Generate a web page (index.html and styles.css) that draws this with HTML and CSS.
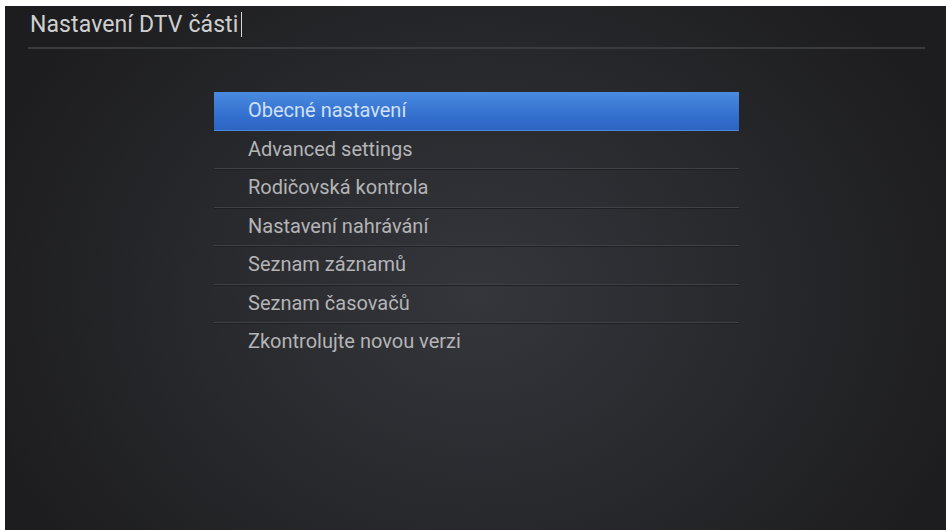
FILE: index.html
```html
<!DOCTYPE html>
<html lang="cs">
<head>
    <meta charset="UTF-8">
    <meta name="viewport" content="width=device-width, initial-scale=1.0">
    <title>Nastavení DTV části</title>
    <link rel="stylesheet" href="styles.css">
</head>
<body>
    <div class="screen">
        <header class="header">
            <h1 class="title">Nastavení DTV části<span class="caret"></span></h1>
        </header>
        <ul class="menu">
            <li class="item active">Obecné nastavení</li>
            <li class="item">Advanced settings</li>
            <li class="item">Rodičovská kontrola</li>
            <li class="item">Nastavení nahrávání</li>
            <li class="item">Seznam záznamů</li>
            <li class="item">Seznam časovačů</li>
            <li class="item last">Zkontrolujte novou verzi</li>
        </ul>
    </div>
</body>
</html>
```
FILE: styles.css
```css
html, body {
    margin: 0;
    padding: 0;
    background: #ffffff;
    height: 100%;
}

body {
    font-family: Roboto, "Noto Sans", sans-serif;
}

.screen {
    box-sizing: border-box;
    margin: 6px 2px 0 5px;
    height: 524px;
    background:
        radial-gradient(ellipse 55% 80% at 50% 55%, #35363b 0%, #2a2b2f 45%, #1d1d1f 100%);
    overflow: hidden;
}

.header {
    padding: 6px 21px 0 23px;
}

.title {
    margin: 0;
    padding: 0 0 9px 2px;
    font-size: 23px;
    font-weight: 400;
    line-height: 26px;
    letter-spacing: 0.1px;
    color: #cfcfcf;
    border-bottom: 2px solid #3a3b3e;
}

.caret {
    display: inline-block;
    width: 1px;
    height: 25px;
    margin-left: 3px;
    vertical-align: -5px;
    background: #d8d8d8;
}

.menu {
    list-style: none;
    margin: 43px 0 0 209px;
    padding: 0;
    width: 525px;
}

.item {
    height: 37.5px;
    line-height: 37.5px;
    padding-left: 34px;
    font-size: 20px;
    color: #b4b4b6;
    border-bottom: 1px solid #404145;
    box-shadow: 0 1px 0 #1f2023;
}

.item.active {
    color: #cfe0f8;
    border-bottom-color: transparent;
    box-shadow: none;
    background: linear-gradient(#4a8be0, #3672d0 55%, #2d64c2);
}

.item.last {
    border-bottom-color: transparent;
    box-shadow: none;
}
```
